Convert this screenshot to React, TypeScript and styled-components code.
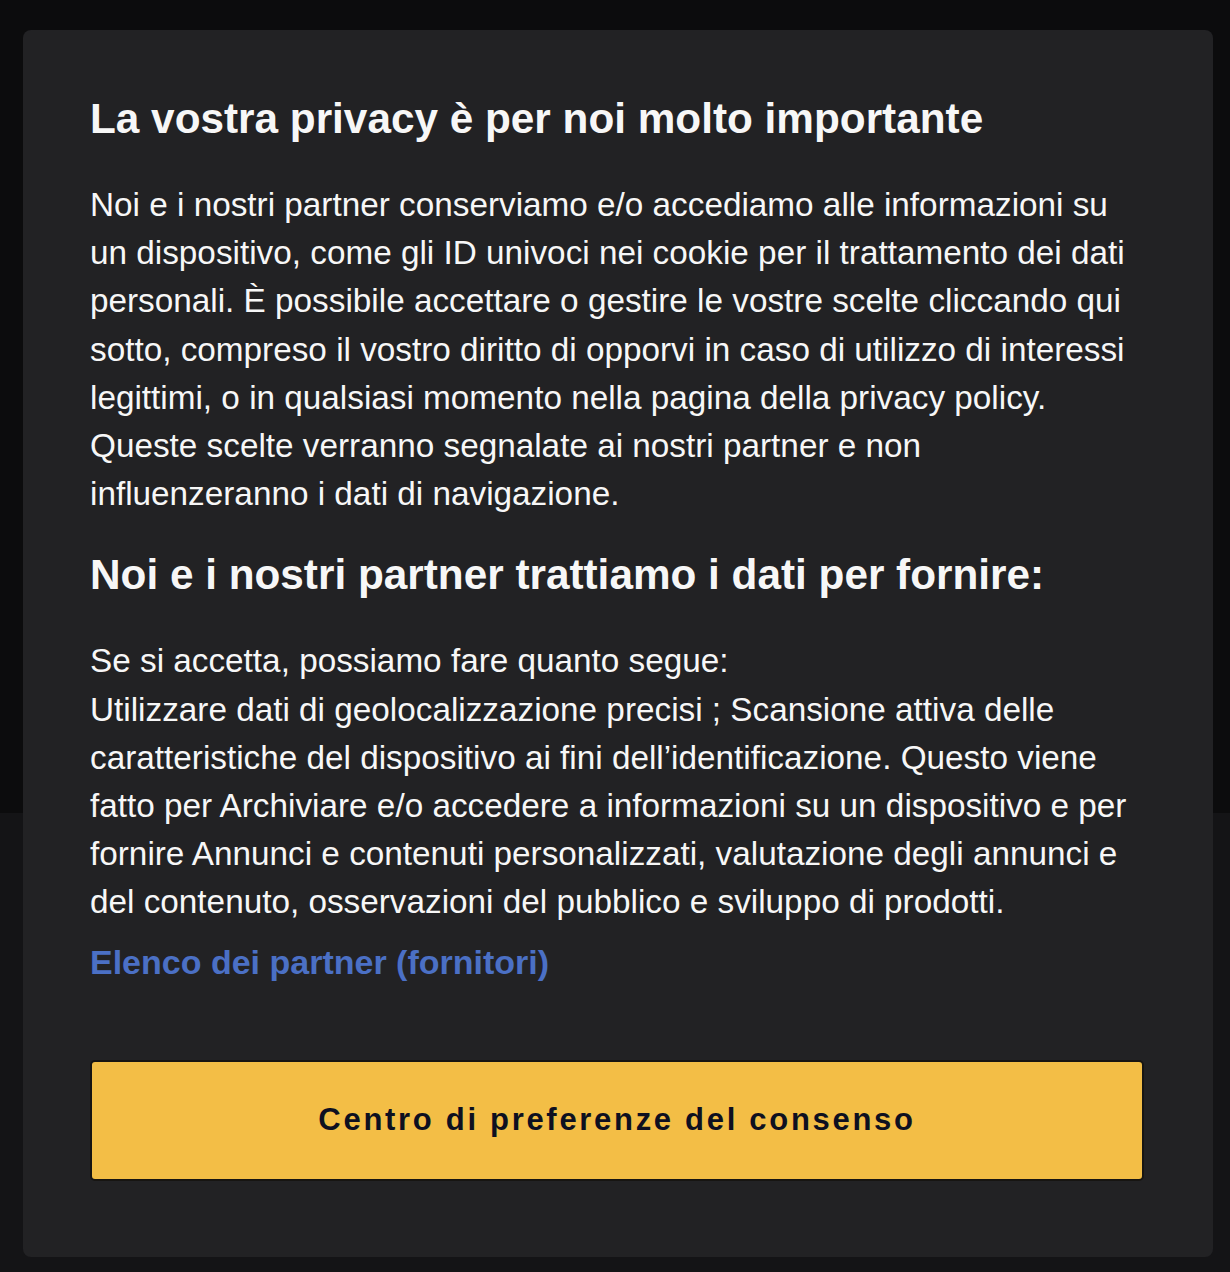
import React from 'react';
import { createGlobalStyle, styled } from 'styled-components';

const GlobalStyle = createGlobalStyle`
  html, body {
    margin: 0;
    padding: 0;
    background: #0c0c0d;
  }
  * { box-sizing: border-box; }
`;

const Backdrop = styled.div`
  position: relative;
  width: 1230px;
  height: 1272px;
  display: flex;
  flex-direction: column;
  overflow: hidden;
`;

const PageTop = styled.div`
  height: 813px;
  background: #0c0c0d;
`;

const PageBottom = styled.div`
  flex: 1;
  background: #141416;
`;

// the modal lies over the page behind it
const Dialog = styled.div`
  position: absolute;
  top: 30px;
  left: 23px;
  width: 1190px;
  height: 1227px;
  background: #222224;
  border-radius: 8px;
  padding: 65px 67px 0 67px;
  color: #f7f7f7;
  font-family: 'Liberation Sans', Arial, Helvetica, sans-serif;
  display: flex;
  flex-direction: column;
`;

const Heading = styled.h2<{ $top?: number }>`
  margin: ${(p) => p.$top ?? 0}px 0 0 0;
  font-size: 42.3px;
  font-weight: 700;
  line-height: 48px;
  white-space: nowrap;
`;

const Paragraph = styled.p`
  margin: 38px 0 0 0;
  max-width: 1046px;
  font-size: 33.3px;
  line-height: 48.2px;
  font-weight: 400;
`;

const PartnerLink = styled.a`
  margin-top: 11px;
  font-size: 34px;
  line-height: 48px;
  font-weight: 700;
  color: #4b70c5;
  text-decoration: none;
  align-self: flex-start;
`;

const ConsentButton = styled.button`
  margin-top: 74px;
  height: 121px;
  width: 1054px;
  background: #f3be46;
  border: 2px solid #171512;
  border-radius: 5px;
  font-family: 'Liberation Sans', Arial, Helvetica, sans-serif;
  font-size: 31px;
  font-weight: 700;
  letter-spacing: 2.7px;
  color: #0e1020;
  cursor: pointer;
`;

export default function App() {
  return (
    <>
      <GlobalStyle />
      <Backdrop>
        <PageTop />
        <PageBottom />
        <Dialog>
          <Heading>La vostra privacy è per noi molto importante</Heading>
          <Paragraph>
            Noi e i nostri partner conserviamo e/o accediamo alle informazioni su un dispositivo, come gli ID
            univoci nei cookie per il trattamento dei dati personali. È possibile accettare o gestire le vostre
            scelte cliccando qui sotto, compreso il vostro diritto di opporvi in caso di utilizzo di interessi
            legittimi, o in qualsiasi momento nella pagina della privacy policy. Queste scelte verranno
            segnalate ai nostri partner e non influenzeranno i dati di navigazione.
          </Paragraph>
          <Heading as="h3" $top={33}>
            Noi e i nostri partner trattiamo i dati per fornire:
          </Heading>
          <Paragraph>
            Se si accetta, possiamo fare quanto segue:
            <br />
            Utilizzare dati di geolocalizzazione precisi ; Scansione attiva delle caratteristiche del
            dispositivo ai fini dell’identificazione. Questo viene fatto per Archiviare e/o accedere a
            informazioni su un dispositivo e per fornire Annunci e contenuti personalizzati, valutazione degli
            annunci e del contenuto, osservazioni del pubblico e sviluppo di prodotti.
          </Paragraph>
          <PartnerLink href="#">Elenco dei partner (fornitori)</PartnerLink>
          <ConsentButton>Centro di preferenze del consenso</ConsentButton>
        </Dialog>
      </Backdrop>
    </>
  );
}
